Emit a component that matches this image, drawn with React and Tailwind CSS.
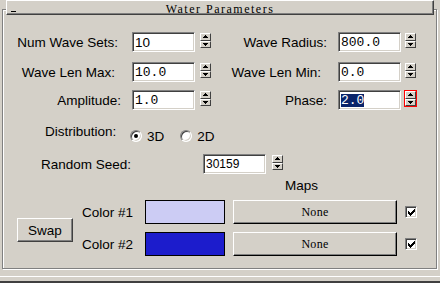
import React from 'react';

// classic sunken edit box
function Field({ value, mono, small, selected, className = '' }) {
  return (
    <div
      className={`flex h-[20px] w-[63px] shrink-0 items-center border border-t-[#808080] border-l-[#808080] border-b-white border-r-white bg-white pl-[2px] shadow-[inset_1px_1px_0_#404040,inset_-1px_-1px_0_#d4d0c8] ${className}`}
    >
      <span
        className={`${mono ? "font-['Liberation_Mono',monospace] text-[13px]" : small ? 'text-[12px]' : 'text-[13.5px]'} ${selected ? 'bg-[#0a246a] text-white' : ''} h-[13px] leading-[13px]`}
      >
        {value}
      </span>
    </div>
  );
}

function Arrow({ up }) {
  return (
    <svg width="5" height="3" viewBox="0 0 5 3" shapeRendering="crispEdges">
      <path
        fill="#000"
        d={up ? 'M2 0h1v1h-1z M1 1h3v1h-3z M0 2h5v1h-5z' : 'M0 0h5v1h-5z M1 1h3v1h-3z M2 2h1v1h-1z'}
      />
    </svg>
  );
}

function Spinner({ focus, className = '' }) {
  return (
    <div
      className={`mt-[1px] flex h-[15px] w-[11px] shrink-0 flex-col self-start ${focus ? 'outline outline-[#ff0000]' : ''} ${className}`}
    >
      <div className="flex flex-1 items-center justify-center border border-t-white border-l-white border-b-[#404040] border-r-[#404040] bg-[#d4d0c8]">
        <Arrow up />
      </div>
      <div className="flex flex-1 items-center justify-center border border-t-white border-l-white border-b-[#404040] border-r-[#404040] bg-[#d4d0c8]">
        <Arrow />
      </div>
    </div>
  );
}

function Radio({ checked, className = '' }) {
  return (
    <div
      className={`flex h-[12px] w-[12px] shrink-0 items-center justify-center rounded-full border border-t-[#808080] border-l-[#808080] border-b-white border-r-white bg-white shadow-[inset_1px_1px_0_#404040,inset_-1px_-1px_0_#d4d0c8] ${className}`}
    >
      {checked && <div className="h-[4px] w-[4px] rounded-full bg-black" />}
    </div>
  );
}

function Check({ className = '' }) {
  return (
    <div
      className={`flex h-[12px] w-[12px] shrink-0 items-center justify-center border border-t-[#808080] border-l-[#808080] border-b-white border-r-white bg-white shadow-[inset_1px_1px_0_#404040,inset_-1px_-1px_0_#d4d0c8] ${className}`}
    >
      <svg width="7" height="7" viewBox="0 0 7 7" shapeRendering="crispEdges">
        <path
          fill="#000"
          d="M6 0h1v1h-1z M5 1h2v1h-2z M0 2h1v1h-1z M4 2h3v1h-3z M0 3h2v1h-2z M3 3h3v1h-3z M0 4h5v1h-5z M1 5h3v1h-3z M2 6h1v1h-1z"
        />
      </svg>
    </div>
  );
}

const rows = [
  { l: 'Num Wave Sets:', lp: 'pr-[4px]', lv: '10', lm: false, r: 'Wave Radius:', rp: 'pr-[1px]', rv: '800.0' },
  { l: 'Wave Len Max:', lp: 'pr-[7px]', lv: '10.0', lm: true, r: 'Wave Len Min:', rp: 'pr-[7px]', rv: '0.0' },
  { l: 'Amplitude:', lp: 'pr-[1px]', lv: '1.0', lm: true, r: 'Phase:', rp: 'pr-[1px]', rv: '2.0', sel: true },
];

const rowTops = ['mt-[22px]', 'mt-[10px]', 'mt-[8px]'];

function ColorRow({ label, swatch }) {
  return (
    <div className="flex h-[24px] items-center">
      <span className="w-[63px] shrink-0">{label}</span>
      <div className={`h-[24px] w-[80px] shrink-0 border border-black ${swatch}`} />
      <div className="ml-[8px] flex h-[24px] w-[164px] shrink-0 items-center justify-center border border-t-white border-l-white border-b-black border-r-black bg-[#d4d0c8] shadow-[inset_-1px_-1px_0_#808080] font-['Liberation_Serif',serif] text-[12px] tracking-[0.3px]">
        None
      </div>
      <Check className="ml-[8px]" />
    </div>
  );
}

export default function App() {
  return (
    <div className="h-[283px] w-[440px] overflow-hidden bg-[#d4d0c8] font-['Liberation_Sans',Arial,sans-serif] text-[13.5px] leading-[15px] text-black">
      {/* rollout title bar */}
      <div className="relative z-10 ml-[6px] flex h-[15px] w-[428px] items-start border border-t-white border-l-white border-b-[#404040] border-r-[#404040] bg-[#d4d0c8] shadow-[inset_-1px_-1px_0_#808080]">
        <div className="ml-[4px] mt-[10px] h-[1px] w-[5px] shrink-0 bg-black" />
        <span className="mr-[9px] mt-[3px] flex-1 text-center font-['Liberation_Serif',serif] text-[12px] leading-[11px] tracking-[1.5px]">
          Water Parameters
        </span>
      </div>

      {/* rollout body */}
      <div className="-mt-[6px] ml-[2px] h-[260px] w-[435px] border border-[#808080] shadow-[inset_1px_1px_0_#fff,1px_1px_0_#fff]">
        {rows.map((r, i) => (
          <div key={r.l} className={`flex h-[20px] items-center ${rowTops[i]}`}>
            <span className={`w-[119px] shrink-0 text-right ${r.lp}`}>{r.l}</span>
            <Field value={r.lv} mono={r.lm} className="ml-[10px]" />
            <Spinner className="ml-[5px]" />
            <span className={`w-[117px] shrink-0 text-right ${r.rp}`}>{r.r}</span>
            <Field value={r.rv} mono selected={r.sel} className="ml-[10px]" />
            <Spinner className="ml-[4px]" focus={r.sel} />
          </div>
        ))}

        <div className="mt-[14px] flex h-[20px] items-start">
          <span className="ml-[42px] w-[85px] shrink-0">Distribution:</span>
          <Radio checked className="mt-[6px]" />
          <span className="ml-[5px] mt-[5px]">3D</span>
          <Radio className="ml-[16px] mt-[6px]" />
          <span className="ml-[5px] mt-[5px]">2D</span>
        </div>

        <div className="mt-[10px] flex h-[20px] items-center">
          <span className="ml-[38px] w-[162px] shrink-0">Random Seed:</span>
          <Field value="30159" small />
          <Spinner className="ml-[6px]" />
        </div>

        <div className="ml-[282px] mt-[4px]">Maps</div>

        <div className="mt-[7px] flex items-start">
          <div className="ml-[14px] mt-[18px] flex h-[24px] w-[56px] shrink-0 items-center justify-center border border-t-white border-l-white border-b-[#404040] border-r-[#404040] shadow-[inset_-1px_-1px_0_#808080]">
            Swap
          </div>
          <div className="ml-[9px] flex flex-col gap-[8px]">
            <ColorRow label="Color #1" swatch="bg-[#ccccf4]" />
            <ColorRow label="Color #2" swatch="bg-[#1c1ccc]" />
          </div>
        </div>
      </div>

      {/* next rollout edge */}
      <div className="mt-[7px] h-[1px] w-full bg-white" />
      <div className="mt-[4px] h-[2px] w-full bg-[#404040]" />
    </div>
  );
}
